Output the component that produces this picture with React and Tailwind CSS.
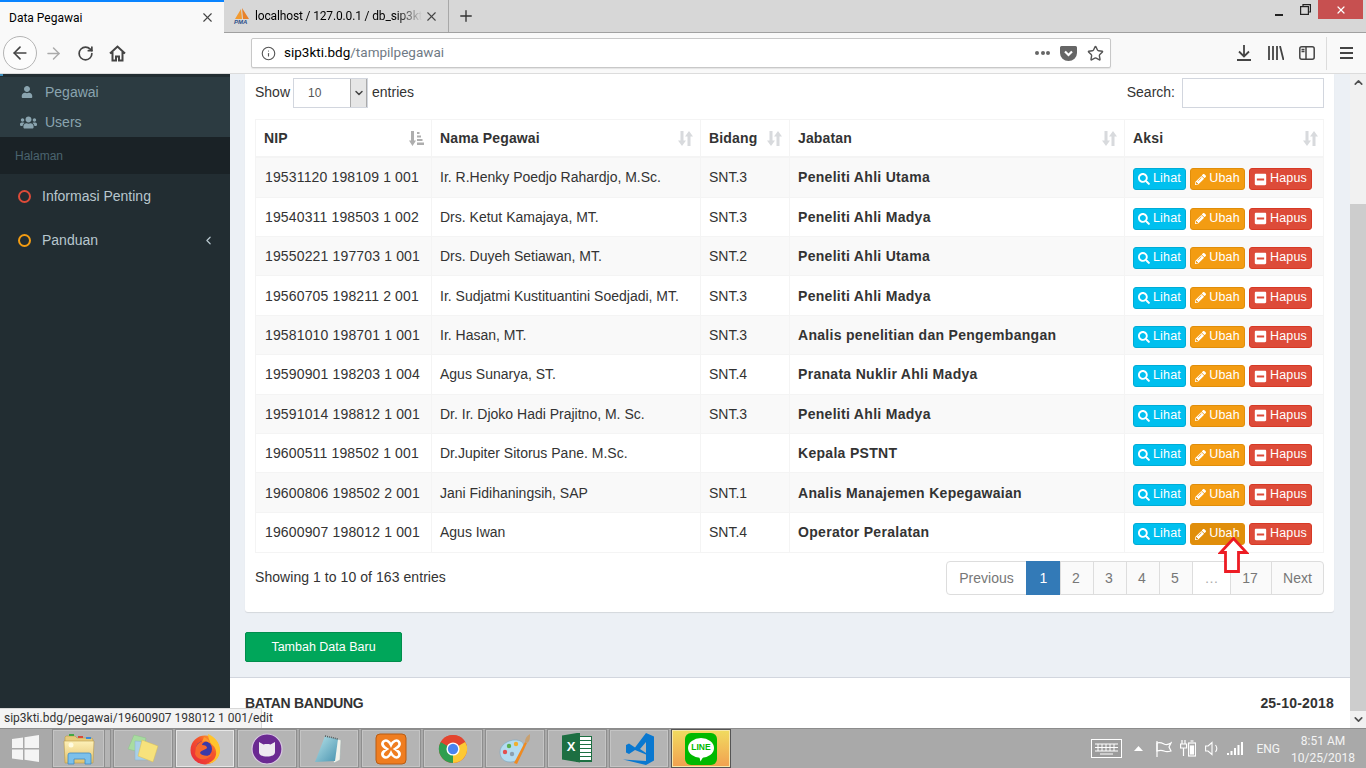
import React from "react";
import { ArrowLeft, ArrowRight, RotateCw, Info, X, Plus, Star, ChevronUp, ChevronDown, ChevronLeft } from "lucide-react";
import { FaUser, FaUsers, FaSearch, FaPencilAlt, FaMinusSquare } from "react-icons/fa";

const rows = [
  ["19531120 198109 1 001", "Ir. R.Henky Poedjo Rahardjo, M.Sc.", "SNT.3", "Peneliti Ahli Utama"],
  ["19540311 198503 1 002", "Drs. Ketut Kamajaya, MT.", "SNT.3", "Peneliti Ahli Madya"],
  ["19550221 197703 1 001", "Drs. Duyeh Setiawan, MT.", "SNT.2", "Peneliti Ahli Utama"],
  ["19560705 198211 2 001", "Ir. Sudjatmi Kustituantini Soedjadi, MT.", "SNT.3", "Peneliti Ahli Madya"],
  ["19581010 198701 1 001", "Ir. Hasan, MT.", "SNT.3", "Analis penelitian dan Pengembangan"],
  ["19590901 198203 1 004", "Agus Sunarya, ST.", "SNT.4", "Pranata Nuklir Ahli Madya"],
  ["19591014 198812 1 001", "Dr. Ir. Djoko Hadi Prajitno, M. Sc.", "SNT.3", "Peneliti Ahli Madya"],
  ["19600511 198502 1 001", "Dr.Jupiter Sitorus Pane. M.Sc.", "", "Kepala PSTNT"],
  ["19600806 198502 2 001", "Jani Fidihaningsih, SAP", "SNT.1", "Analis Manajemen Kepegawaian"],
  ["19600907 198012 1 001", "Agus Iwan", "SNT.4", "Operator Peralatan"],
];

const gridCols = "grid grid-cols-[176px_269px_89px_335px_200px]";

// panah sort bawaan datatables
function SortIcon() {
  return (
    <svg width="15" height="15" viewBox="0 0 15 15" fill="#d8dadd">
      <path d="M2.500 0h3v9.500H8L4 15 0 9.500h2.500z" />
      <path d="M9.500 15h3V5.500H15L11 0 7 5.500h2.500z" />
    </svg>
  );
}

function SortActiveIcon() {
  return (
    <svg width="15" height="15" viewBox="0 0 15 15" fill="#aeaeae">
      <path d="M2 0h3v9.500h2L3.500 15 0 9.500h2z" />
      <path d="M8 1h2.500v2H8zM8 4.500h4v2H8zM8 8h5.500v2H8zM8 11.500h7V14H8z" />
    </svg>
  );
}

function HeadCell({ label, active }) {
  return (
    <div className="flex items-center justify-between pl-2 pr-[7px] border-r border-[#f4f4f4] last:border-r-0">
      <span className="font-bold text-sm text-[#333] tracking-[0.15px]">{label}</span>
      {active ? <SortActiveIcon /> : <SortIcon />}
    </div>
  );
}

function ActionBtn({ bg, border, width, icon, label }) {
  return (
    <button className={`flex items-center justify-center gap-[3px] h-[22px] rounded-[3px] border text-white text-[12.5px] tracking-[0.2px] ${bg} ${border} ${width}`}>
      {icon}
      <span>{label}</span>
    </button>
  );
}

function PageBtn({ children, active, cls }) {
  return (
    <div className={`h-[34px] flex items-center justify-center -ml-px first:ml-0 border text-sm ${active ? "bg-[#337ab7] border-[#337ab7] text-white" : "border-[#ddd] text-[#777]"} ${cls}`}>
      {children}
    </div>
  );
}

function TaskBtn({ children, active, line, cls = "w-[60px]" }) {
  let tone = "border-[#8e8e8e] bg-[#b4b4b4] shadow-[inset_0_0_0_1px_#c4c4c4]";
  if (active) tone = "border-[#8e8e8e] bg-[#c6c6c6] shadow-[inset_0_0_0_1px_#e6e6e6]";
  if (line) tone = "border-[#555] bg-gradient-to-b from-[#f0dc60] to-[#f0a050] shadow-[inset_0_0_0_1px_#f8e8a8]";
  return <div className={`h-[39px] border flex items-center justify-center shrink-0 ${cls} ${tone}`}>{children}</div>;
}

function FolderIcon() {
  return (
    <svg width="34" height="34" viewBox="0 0 34 34">
      <defs>
        <linearGradient id="fold" x1="0" y1="0" x2="0" y2="1">
          <stop offset="0" stopColor="#fdf0b8" />
          <stop offset="1" stopColor="#e4c26c" />
        </linearGradient>
      </defs>
      <path d="M4 4h9l2 2h14a2 2 0 0 1 2 2v4H3V5z" fill="#e7cb7c" stroke="#b99a4a" strokeWidth=".6" />
      <rect x="7" y="2" width="5" height="2" fill="#43a843" />
      <rect x="16" y="4" width="5" height="2" fill="#d84a3a" />
      <rect x="24" y="5" width="5" height="2" fill="#3a8ad8" />
      <path d="M2 9h30l-1 22H3z" fill="url(#fold)" stroke="#b99a4a" strokeWidth=".6" />
      <path d="M8 21h19a2 2 0 0 1 2 2v9h-6v-5H12v5H6v-9a2 2 0 0 1 2-2z" fill="#7cc0ea" stroke="#3d8cc6" strokeWidth=".8" />
      <circle cx="9" cy="13" r="2.500" fill="#fffbe0" />
    </svg>
  );
}

function NotesIcon() {
  return (
    <svg width="34" height="34" viewBox="0 0 34 34">
      <path d="M8 3l12 3-3 15L2 17z" fill="#a8dca0" stroke="#8cc088" strokeWidth=".5" />
      <path d="M9 9l14 1-1 18H9z" fill="#a8cfe8" stroke="#8ab0cc" strokeWidth=".5" />
      <path d="M16 8l16 6-5 16-15-6z" fill="#f7e27c" stroke="#d6bd58" strokeWidth=".5" />
    </svg>
  );
}

function FirefoxIcon() {
  return (
    <svg width="32" height="32" viewBox="0 0 32 32">
      <defs>
        <linearGradient id="ffo" x1="0" y1="1" x2="1" y2="0">
          <stop offset="0" stopColor="#e8243c" />
          <stop offset=".6" stopColor="#f5562c" />
          <stop offset="1" stopColor="#ffcb2e" />
        </linearGradient>
      </defs>
      <circle cx="16" cy="17" r="14.500" fill="url(#ffo)" />
      <path d="M19 1c7 3 12 9 12 16 0 8-6 14-14 14 8-2 11-8 10-13-1-6-5-6-6-9-1-3-2-5-2-8z" fill="#ffc42c" />
      <circle cx="15" cy="16" r="8" fill="#3b3aa8" />
      <path d="M7 14c3-6 8-7 11-6-3 1-5 2-5 4 3 0 5 1 5 3-2 2-6 2-7 5 2 3 8 4 12 1-3 6-14 8-17 0z" fill="#f7672c" />
      <path d="M15 4c3 1 5 3 6 6-3-2-6-2-8-1z" fill="#ff9a2c" />
    </svg>
  );
}

function CatIcon() {
  return (
    <svg width="32" height="32" viewBox="0 0 32 32">
      <circle cx="16" cy="16" r="15" fill="#6b2a92" stroke="#d8c8e0" strokeWidth="1.200" />
      <path d="M8 9l4.500 2.500c2.300-.6 4.700-.6 7 0L24 9v10c0 3-3 4.500-8 4.500S8 22 8 19z" fill="#eeeaf0" />
    </svg>
  );
}

function NotepadIcon() {
  return (
    <svg width="32" height="32" viewBox="0 0 32 32">
      <defs>
        <linearGradient id="pad" x1="0" y1="0" x2="1" y2="1">
          <stop offset="0" stopColor="#b8e4ea" />
          <stop offset="1" stopColor="#4a94b0" />
        </linearGradient>
      </defs>
      <path d="M12 3l16 4-1 20-6 3z" fill="#f2f2ea" stroke="#9aa" strokeWidth=".5" />
      <path d="M12 3l13 3-3 22-20 1z" fill="url(#pad)" />
      <path d="M12 3l13 3" stroke="#555" strokeWidth="1.500" strokeDasharray="1 1" />
    </svg>
  );
}

function XamppIcon() {
  return (
    <svg width="32" height="32" viewBox="0 0 32 32">
      <rect x="1" y="1" width="30" height="30" rx="4" fill="#ef7d20" stroke="#b85c14" />
      <path d="M8 9c3-3 6-1 8 3 2-4 6-6 8-3 2 3-1 5-4 7 3 2 6 4 4 7-2 3-6 1-8-3-2 4-5 6-8 3-2-3 1-5 4-7-3-2-6-4-4-7z" fill="none" stroke="#fff" strokeWidth="2.600" />
    </svg>
  );
}

function ChromeIcon() {
  return (
    <svg width="30" height="30" viewBox="0 0 32 32">
      <circle cx="16" cy="16" r="15" fill="#e3452f" />
      <path d="M16 16L3 8.500A15 15 0 0 0 16 31z" fill="#2f9e4f" />
      <path d="M16 16v15A15 15 0 0 0 29 8.500H16z" fill="#fcc934" />
      <path d="M16 16L3 8.500A15 15 0 0 1 29 8.500z" fill="#e3452f" />
      <circle cx="16" cy="16" r="7" fill="#fff" />
      <circle cx="16" cy="16" r="5.500" fill="#4a84f0" />
    </svg>
  );
}

function PaintIcon() {
  return (
    <svg width="34" height="34" viewBox="0 0 34 34">
      <path d="M2 20c0-7 8-12 15-12 5 0 9 2 9 7 0 4-2 5-4 9-1 3-4 6-10 6-6 0-10-4-10-10z" fill="#b4dcf0" stroke="#7aa8c4" strokeWidth=".6" />
      <circle cx="7" cy="20" r="2.200" fill="#e25050" />
      <circle cx="11" cy="14" r="2.200" fill="#5ab050" />
      <circle cx="18" cy="12" r="2.200" fill="#f0b030" />
      <circle cx="14" cy="22" r="2.200" fill="#8ca0b0" />
      <path d="M16 31L27 10l2 1-10 21z" fill="#f08a20" />
      <path d="M27 10c0-4 2-6 5-8 0 4 0 7-3 9z" fill="#c8a070" />
    </svg>
  );
}

function VscodeIcon() {
  return (
    <svg width="32" height="32" viewBox="0 0 32 32">
      <path fillRule="evenodd" d="M23 0l8 3.500v24L23 32 0 26.500l23 1.500V21.500L12 17l-6 4-3-1.500V12l3-1.500 6 4zM23 9l-6 7 6 4z" fill="#0a78d0" />
    </svg>
  );
}

function ExcelIcon() {
  return (
    <div className="relative w-[30px] h-[32px]">
      <div className="absolute right-0 top-[3px] w-[16px] h-[26px] bg-white border border-[#1d6f42] bg-[repeating-linear-gradient(0deg,#1d6f42_0,#1d6f42_1px,#fff_1px,#fff_4px)]" />
      <div className="absolute left-0 top-0 w-[18px] h-[30px] bg-[#1d6f42] [clip-path:polygon(0_3px,100%_0,100%_100%,0_27px)] flex items-center justify-center text-white font-bold text-[13px] font-['Liberation_Sans',sans-serif]">
        X
      </div>
    </div>
  );
}

function LineIcon() {
  return (
    <div className="relative w-[32px] h-[32px] rounded-[6px] bg-[#00b900] flex items-center justify-center">
      <div className="relative w-[26px] h-[20px] mb-[2px] rounded-[50%] bg-white flex items-center justify-center text-[#00b900] font-bold text-[8.5px] leading-none font-['Liberation_Sans',sans-serif]">
        LINE
        <div className="absolute left-[11px] -bottom-[4px] w-[5px] h-[6px] bg-white [clip-path:polygon(0_0,100%_0,30%_100%)]" />
      </div>
    </div>
  );
}

function PmaIcon() {
  return (
    <div className="relative w-[16px] h-[16px] shrink-0 font-['Liberation_Sans',sans-serif]">
      <svg width="16" height="11" viewBox="0 0 16 11" className="absolute top-0 left-0">
        <path d="M1 11L7 1l1 10z" fill="#f29a30" />
        <path d="M8 0l7 11H9z" fill="#e8822a" />
      </svg>
      <span className="absolute -bottom-[1px] left-0 text-[6px] leading-none font-bold italic text-[#2d4f8a]">PMA</span>
    </div>
  );
}

export default function App() {
  return (
    <div className="w-[1366px] h-[768px] overflow-hidden relative flex flex-col font-['Liberation_Sans',Arial,sans-serif] text-sm text-[#333]">
      {/* tab bar firefox */}
      <div className="h-[33px] shrink-0 bg-[#d7d7d7] border-b border-[#a0a0a0] flex items-stretch font-['Roboto',sans-serif] text-xs relative">
        <div className="w-[224px] h-[33px] bg-[#f9f9f9] border-t-2 border-[#0a84ff] flex items-center justify-between pl-[9px] pr-[9px] text-black">
          <span>Data Pegawai</span>
          <X size={15} strokeWidth={1.8} className="text-[#444]" />
        </div>
        <div className="w-[225px] border-r border-[#a8a8a8] flex items-center pl-[10px] pr-[9px] text-black">
          <PmaIcon />
          <span className="ml-[5px] whitespace-nowrap tracking-[-0.15px] [mask-image:linear-gradient(to_right,#000_85%,transparent)]">localhost / 127.0.0.1 / db_sip3kt</span>
          <X size={15} strokeWidth={1.8} className="ml-auto shrink-0 text-[#444]" />
        </div>
        <div className="w-[34px] flex items-center justify-center">
          <Plus size={18} strokeWidth={1.8} className="text-[#333]" />
        </div>
        <div className="ml-auto flex items-start h-[19px]">
          <div className="w-[26px] h-[19px] flex items-end justify-center pb-[3px]"><div className="w-[8px] h-[2px] bg-[#222]" /></div>
          <div className="w-[26px] h-[19px] flex items-center justify-center">
            <svg width="11" height="11" viewBox="0 0 11 11" fill="none" stroke="#222" strokeWidth="1.200"><rect x=".6" y="2.600" width="7.800" height="7.800" /><path d="M3 2.500V.6h7.400v7.400H8.500" /></svg>
          </div>
          <div className="w-[45px] h-[19px] mr-[3px] bg-[#c75050] flex items-center justify-center"><X size={12} strokeWidth={2.4} className="text-white" /></div>
        </div>
      </div>

      {/* toolbar */}
      <div className="h-[41px] shrink-0 bg-[#f9f9f9] border-b border-[#dcdcdc] flex items-center text-[#444]">
        <div className="ml-[3px] w-[34px] h-[34px] rounded-full border border-[#b4b4b4] bg-[#fcfcfc] flex items-center justify-center">
          <ArrowLeft size={20} strokeWidth={2} />
        </div>
        <ArrowRight size={19} strokeWidth={1.8} className="ml-[7px] text-[#aaa]" />
        <RotateCw size={17} strokeWidth={2.4} className="ml-[14px]" />
        <svg width="17" height="17" viewBox="0 0 17 17" className="ml-[15px]" fill="none" stroke="#444" strokeWidth="2"><path d="M1 8.500L8.500 1.500 16 8.500M3.500 7v8.500h3.500v-4h3v4h3.500V7" /></svg>
        <div className="ml-[125px] w-[860px] h-[30px] bg-white border border-[#c8c8c8] rounded-[2px] flex items-center pl-[9px] pr-[6px] text-[13.5px] font-['Roboto',sans-serif] shadow-[0_1px_1px_#e4e4e4]">
          <Info size={15} strokeWidth={1.8} className="text-[#555]" />
          <span className="ml-[8px] text-black">sip3kti.bdg</span>
          <span className="text-[#6f7a85]">/tampilpegawai</span>
          <div className="ml-auto flex items-center gap-[1.5px]">
            <div className="w-[4px] h-[4px] rounded-full bg-[#666]" />
            <div className="w-[4px] h-[4px] rounded-full bg-[#666]" />
            <div className="w-[4px] h-[4px] rounded-full bg-[#666]" />
          </div>
          <svg width="17" height="15" viewBox="0 0 17 15" className="ml-[10px]"><path d="M1.500 0h14A1.500 1.500 0 0 1 17 1.500V7a8.500 8 0 0 1-17 0V1.500A1.500 1.500 0 0 1 1.500 0z" fill="#666" /><path d="M5 5.500l3.500 3.500L12 5.500" fill="none" stroke="#fff" strokeWidth="2.200" /></svg>
          <Star size={17} strokeWidth={2} className="ml-[10px] text-[#555]" />
        </div>
        <svg width="14" height="16" viewBox="0 0 14 16" className="ml-[126px]" fill="none" stroke="#444" strokeWidth="1.800"><path d="M7 0v11M2 6.500L7 11.500l5-5M0 15h14" /></svg>
        <svg width="16" height="14" viewBox="0 0 16 14" className="ml-[17px]" fill="none" stroke="#444" strokeWidth="1.800"><path d="M1 0v14M5 0v14M9 0v14M12 0l3.500 14" /></svg>
        <svg width="16" height="14" viewBox="0 0 16 14" className="ml-[15px]" fill="none" stroke="#444" strokeWidth="1.500"><rect x=".8" y=".8" width="14.400" height="12.400" rx="2" /><path d="M7 1v12" /><path d="M2.500 3.500h3M2.500 5.500h3" /></svg>
        <div className="ml-[11px] w-px h-[33px] bg-[#dcdcdc]" />
        <div className="ml-[13px] w-[13px] flex flex-col gap-[3px]">
          <div className="h-[2px] bg-[#444]" />
          <div className="h-[2px] bg-[#444]" />
          <div className="h-[2px] bg-[#444]" />
        </div>
      </div>

      {/* isi halaman */}
      <div className="flex-1 min-h-0 flex overflow-hidden">
        <aside className="w-[230px] shrink-0 bg-[#222d32]">
          <div className="h-[3px]"><div className="w-[3px] h-[2px] bg-[#3c8dbc]" /></div>
          <div className="h-[60px] bg-[#2c3b41] flex flex-col text-[#8aa4af]">
            <div className="h-[30px] flex items-center pl-[21px]"><FaUser size={12} /><span className="ml-[12px]">Pegawai</span></div>
            <div className="h-[30px] flex items-center pl-[20px]"><FaUsers size={17} /><span className="ml-[8px]">Users</span></div>
          </div>
          <div className="h-[37px] bg-[#1a2226] flex items-center pl-[15px] text-xs text-[#4b646f]">Halaman</div>
          <div className="h-[44px] flex items-center pl-[18px] text-[#b8c7ce]">
            <div className="w-[13px] h-[13px] rounded-full border-2 border-[#dd4b39]" />
            <span className="ml-[11px]">Informasi Penting</span>
          </div>
          <div className="h-[44px] flex items-center pl-[18px] pr-[15px] text-[#b8c7ce]">
            <div className="w-[13px] h-[13px] rounded-full border-2 border-[#f39c12]" />
            <span className="ml-[11px]">Panduan</span>
            <ChevronLeft size={13} strokeWidth={2.2} className="ml-auto" />
          </div>
        </aside>

        <main className="flex-1 min-w-0 bg-[#ecf0f5] flex flex-col">
          <div className="ml-[15px] mr-[16px] h-[538px] shrink-0 bg-white rounded-b-[3px] shadow-[0_1px_1px_rgba(0,0,0,0.1)] px-[10px] pt-[4px]">
            <div className="flex items-center h-[30px]">
              <span className="-mt-[2px]">Show</span>
              <div className="ml-[3px] w-[75px] h-[30px] border border-[#d2d6de] flex items-center pl-[14px] text-xs text-[#555]">
                10
                <div className="ml-auto w-[17px] h-[28px] bg-[#e6e6e6] border-x border-[#aaa] flex items-center justify-center">
                  <ChevronDown size={12} strokeWidth={3} className="text-[#444]" />
                </div>
              </div>
              <span className="ml-[4px] -mt-[2px]">entries</span>
              <span className="ml-auto -mt-[2px]">Search:</span>
              <div className="ml-[7px] w-[142px] h-[30px] border border-[#d2d6de]" />
            </div>

            <div className="mt-[11px] border border-[#f4f4f4] w-[1069px]">
              <div className={`${gridCols} h-[38.2px] border-b-2 border-[#f4f4f4]`}>
                <HeadCell label="NIP" active />
                <HeadCell label="Nama Pegawai" />
                <HeadCell label="Bidang" />
                <HeadCell label="Jabatan" />
                <HeadCell label="Aksi" />
              </div>
              {rows.map((r, i) => (
                <div key={r[0]} className={`${gridCols} h-[39.4px] border-b border-[#f4f4f4] last:border-b-0 ${i % 2 === 0 ? "bg-[#f9f9f9]" : "bg-white"}`}>
                  <div className="flex items-center pl-[9px] border-r border-[#f4f4f4] tracking-[0.15px]">{r[0]}</div>
                  <div className="flex items-center pl-2 border-r border-[#f4f4f4]">{r[1]}</div>
                  <div className="flex items-center pl-2 border-r border-[#f4f4f4]">{r[2]}</div>
                  <div className="flex items-center pl-2 border-r border-[#f4f4f4] font-bold tracking-[0.3px]">{r[3]}</div>
                  <div className="flex items-center pl-2 pt-1 gap-1">
                    <ActionBtn bg="bg-[#00c0ef]" border="border-[#00acd6]" width="w-[53px]" icon={<FaSearch size={12} />} label="Lihat" />
                    <ActionBtn
                      bg={i === 9 ? "bg-[#e08e0b]" : "bg-[#f39c12]"}
                      border="border-[#e08e0b]"
                      width="w-[55px]"
                      icon={<FaPencilAlt size={11} />}
                      label="Ubah"
                    />
                    <ActionBtn bg="bg-[#dd4b39]" border="border-[#d73925]" width="w-[63px]" icon={<FaMinusSquare size={13} />} label="Hapus" />
                  </div>
                </div>
              ))}
            </div>

            <div className="mt-[8px] flex items-center justify-between w-[1069px]">
              <span className="-mt-[2px] tracking-[0.06px]">Showing 1 to 10 of 163 entries</span>
              <div className="flex">
                <PageBtn cls="w-[81px] rounded-l-[4px] bg-white">Previous</PageBtn>
                <PageBtn active cls="w-[35px]">1</PageBtn>
                <PageBtn cls="w-[34px] pr-[2px] bg-[#fafafa]">2</PageBtn>
                <PageBtn cls="w-[34px] pr-[2px] bg-[#fafafa]">3</PageBtn>
                <PageBtn cls="w-[34px] pr-[2px] bg-[#fafafa]">4</PageBtn>
                <PageBtn cls="w-[34px] pr-[2px] bg-[#fafafa]">5</PageBtn>
                <PageBtn cls="w-[39px] bg-white text-[#aaa]">…</PageBtn>
                <PageBtn cls="w-[42px] pr-[2px] bg-[#fafafa]">17</PageBtn>
                <PageBtn cls="w-[53px] rounded-r-[4px] bg-[#fafafa]">Next</PageBtn>
              </div>
            </div>
          </div>

          <button className="ml-[15px] mt-[20px] w-[157px] h-[30px] pt-[1px] shrink-0 bg-[#00a65a] border border-[#008d4c] rounded-[2px] text-white text-[12.5px]">Tambah Data Baru</button>

          <div className="mt-[15px] flex-1 bg-white border-t border-[#d2d6de] flex items-start justify-between pl-[15px] pr-[16px] pt-[15px] font-bold">
            <span className="tracking-[-0.3px]">BATAN BANDUNG</span>
            <span className="tracking-[0.2px]">25-10-2018</span>
          </div>
        </main>

        {/* scrollbar */}
        <div className="w-[16px] shrink-0 bg-[#f1f1f1] flex flex-col items-center">
          <div className="h-[16px] flex items-center justify-center"><ChevronUp size={13} strokeWidth={3} className="text-[#505050]" /></div>
          <div className="mt-[114px] w-full h-[507px] bg-[#cdcdcd]" />
          <div className="mt-auto h-[17px] flex items-center justify-center"><ChevronDown size={13} strokeWidth={3} className="text-[#505050]" /></div>
        </div>
      </div>

      {/* taskbar windows */}
      <div className="h-[40px] shrink-0 bg-[#a9a9a9] border-t border-[#8c8c8c] flex items-center font-['Roboto',sans-serif]">
        <div className="w-[52px] flex justify-center pr-[1px]">
          <svg width="27" height="27" viewBox="0 0 27 27" fill="#f4f4f4"><path d="M0 4l11-1.500V13H0zM12.500 2.300L27 0v13H12.500zM0 14.500h11V25L0 23.500zM12.500 14.500H27V27l-14.500-2.200z" /></svg>
        </div>
        <div className="flex items-center">
          <TaskBtn cls="w-[53px]"><FolderIcon /></TaskBtn>
          <div className="w-[6px] h-[39px] border border-[#8e8e8e] border-l-0 bg-[#b4b4b4]" />
        </div>
        <div className="flex items-center gap-[2px] ml-[2px]">
          <TaskBtn><NotesIcon /></TaskBtn>
          <TaskBtn active><FirefoxIcon /></TaskBtn>
          <TaskBtn><CatIcon /></TaskBtn>
          <TaskBtn><NotepadIcon /></TaskBtn>
          <TaskBtn><XamppIcon /></TaskBtn>
          <TaskBtn><ChromeIcon /></TaskBtn>
          <TaskBtn><PaintIcon /></TaskBtn>
          <TaskBtn><ExcelIcon /></TaskBtn>
          <TaskBtn><VscodeIcon /></TaskBtn>
          <TaskBtn line><LineIcon /></TaskBtn>
        </div>
        <div className="ml-auto flex items-center text-white">
          <svg width="31" height="19" viewBox="0 0 31 19" fill="none" stroke="#fff" strokeWidth="1"><rect x=".5" y=".5" width="30" height="18" fill="#9c9c9c" /><path d="M4 5h23M4 8.500h23M4 12h23M7 5v7M11 5v7M15 5v7M19 5v7M23 5v7M9 15h13" /></svg>
          <svg width="9" height="5" viewBox="0 0 9 5" className="ml-[12px]"><path d="M0 5L4.500 0 9 5z" fill="#fff" /></svg>
          <svg width="16" height="16" viewBox="0 0 16 16" className="ml-[13px]" fill="none" stroke="#fff" strokeWidth="1.200"><path d="M1 0v16" /><path d="M1 2c3-1 5 0 7 1s4 1 7-1l-2 4 2 4c-3 1-5 1-7 0s-4-1-7 0z" /></svg>
          <svg width="16" height="17" viewBox="0 0 16 17" className="ml-[8px]" fill="none" stroke="#fff" strokeWidth="1.200"><path d="M2 0v4M5 0v4M0.600 4h6v4H.6zM3.500 8v8" /><rect x="8.600" y="3" width="7" height="13" /><rect x="10.500" y="6" width="3" height="8" fill="#fff" /><path d="M10.500 1h3" /></svg>
          <svg width="14" height="15" viewBox="0 0 14 15" className="ml-[9px]" fill="none" stroke="#fff" strokeWidth="1.100"><path d="M.6 5h2.500L7 1.500v12L3 10H.6z" /><path d="M10.500 4c1.500 2 1.500 5 0 7" /></svg>
          <svg width="16" height="13" viewBox="0 0 16 13" className="ml-[8px]" fill="#fff"><path d="M0 11h2v2H0zM3.500 9h2v4h-2zM7 6h2v7H7zM10.500 3h2v10h-2zM14 0h2v13h-2z" /></svg>
          <span className="ml-[13px] text-xs text-[#f4f4f4]">ENG</span>
          <div className="ml-[11px] mr-[11px] w-[64px] pt-[3px] text-center text-xs leading-[17px] text-[#f4f4f4] whitespace-nowrap">
            <div>8:51 AM</div>
            <div>10/25/2018</div>
          </div>
        </div>
      </div>

      {/* status link */}
      <div className="absolute left-0 top-[708px] w-[262px] h-[20px] bg-[#f4f4f4] border-t border-r border-[#d8d8d8] rounded-tr-[2px] pl-[4px] text-xs leading-[19px] text-[#333] font-['Roboto',sans-serif] whitespace-nowrap">
        sip3kti.bdg/pegawai/19600907 198012 1 001/edit
      </div>

      {/* panah merah penanda tombol */}
      <svg width="31" height="36" viewBox="0 0 31 36" className="absolute left-[1218px] top-[537px]">
        <path d="M15.500 1.500L28.500 15.500H20.500V34.500H7.500V15.500H2.500z" fill="#fff" stroke="#ed1c24" strokeWidth="2.800" />
      </svg>
    </div>
  );
}
